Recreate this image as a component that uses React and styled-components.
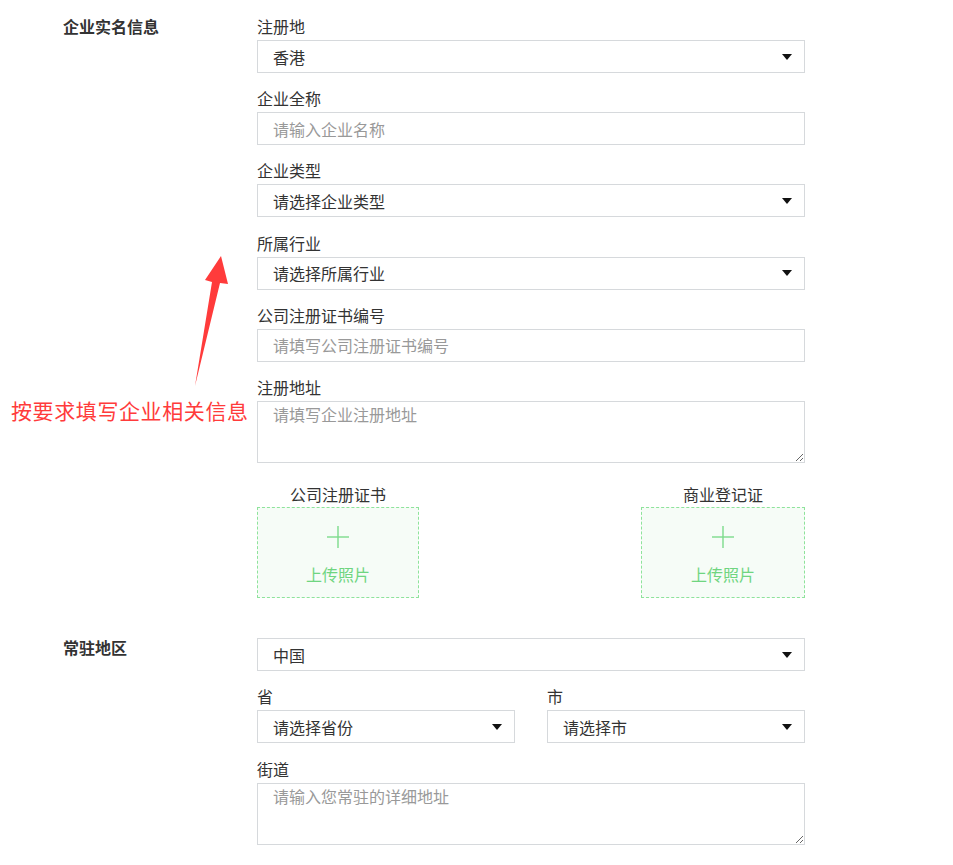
import React from "react"
import styled, { createGlobalStyle } from "styled-components"

const GlobalStyle = createGlobalStyle`
  html, body { margin: 0; padding: 0; background: #fff; }
  body {
    font-family: "Noto Sans CJK SC", "Noto Sans", sans-serif;
    color: #333;
  }
`

const Page = styled.div`
  position: relative;
  width: 953px;
  min-height: 865px;
  padding-top: 16px;
  box-sizing: border-box;
`

const Section = styled.div`
  display: grid;
  grid-template-columns: 194px 548px;
  padding-left: 63px;
  margin-bottom: ${p => p.gap || 0}px;
`

const SectionTitle = styled.div`
  font-size: 16px; font-weight: 700; line-height: 20px;
  color: #333;
  margin-top: ${p => p.shift || 0}px;
`

const Fields = styled.div`
  display: flex; flex-direction: column; gap: 15.2px;
`

const Field = styled.div`
  display: flex; flex-direction: column; gap: 4px;
`

const Label = styled.div`
  font-size: 16px; line-height: 20px; color: #333;
`

const Box = styled.div`
  height: 33px;
  box-sizing: border-box;
  border: 1px solid #d6d9dc;
  display: flex; align-items: center; justify-content: space-between;
  padding: 0 10px 0 15px;
  font-size: 16px;
  color: ${p => (p.placeholder ? "#999" : "#333")};
`

const Caret = styled.span`
  width: 0; height: 0;
  border-left: 5px solid transparent;
  border-right: 5px solid transparent;
  border-top: 6px solid #111;
  margin-right: 2px;
`

const Area = styled.textarea`
  display: block;
  width: 100%;
  height: 62px;
  box-sizing: border-box;
  border: 1px solid #d6d9dc;
  padding: 2px 15px;
  font-family: inherit; font-size: 16px; line-height: 20px;
  resize: vertical; outline: none;
  &::placeholder { color: #999; }
`

const Pair = styled.div`
  display: grid; grid-template-columns: 1fr 1fr; gap: 32px;
`

const UploadRow = styled.div`
  display: flex; justify-content: space-between;
  margin-top: 6px;
`

const Upload = styled.div`
  display: flex; flex-direction: column; align-items: center; gap: 3px;
`

const UploadTitle = styled.div`
  font-size: 16px; line-height: 20px; color: #333;
`

const Drop = styled.div`
  width: ${p => p.w}px; height: 91px;
  box-sizing: border-box;
  border: 1px dashed #8ee39b;
  background: #f6fcf7;
  display: flex; flex-direction: column; align-items: center;
  padding-top: 18px; gap: 16px;
  color: #6fd580; font-size: 16px; line-height: 20px;
`

const Note = styled.div`
  position: absolute;
  left: 11px; top: 396px;
  font-size: 21px; line-height: 28px;
  color: #ff3b3b;
  letter-spacing: 0.6px;
`

const Arrow = styled.svg`
  position: absolute;
  left: 0; top: 0;
`

const Select = ({ value, placeholder }) => (
  <Box placeholder={placeholder ? 1 : 0}>
    <span>{value}</span>
    <Caret />
  </Box>
)

const Input = ({ placeholder }) => (
  <Box placeholder={1}>
    <span>{placeholder}</span>
  </Box>
)

const Plus = () => (
  <svg width="22" height="22" viewBox="0 0 22 22">
    <line x1="11" y1="0" x2="11" y2="22" stroke="#7ddc8b" strokeWidth="1.4" />
    <line x1="0" y1="11" x2="22" y2="11" stroke="#7ddc8b" strokeWidth="1.4" />
  </svg>
)

export default function App() {
  return (
    <Page>
      <GlobalStyle />
      <Section gap={40}>
        <SectionTitle>企业实名信息</SectionTitle>
        <Fields>
          <Field>
            <Label>注册地</Label>
            <Select value="香港" />
          </Field>
          <Field>
            <Label>企业全称</Label>
            <Input placeholder="请输入企业名称" />
          </Field>
          <Field>
            <Label>企业类型</Label>
            <Select value="请选择企业类型" />
          </Field>
          <Field>
            <Label>所属行业</Label>
            <Select value="请选择所属行业" />
          </Field>
          <Field>
            <Label>公司注册证书编号</Label>
            <Input placeholder="请填写公司注册证书编号" />
          </Field>
          <Field>
            <Label>注册地址</Label>
            <Area placeholder="请填写企业注册地址" />
          </Field>
          <UploadRow>
            <Upload>
              <UploadTitle>公司注册证书</UploadTitle>
              <Drop w={162}>
                <Plus />
                <span>上传照片</span>
              </Drop>
            </Upload>
            <Upload>
              <UploadTitle>商业登记证</UploadTitle>
              <Drop w={164}>
                <Plus />
                <span>上传照片</span>
              </Drop>
            </Upload>
          </UploadRow>
        </Fields>
      </Section>

      <Section>
        <SectionTitle shift={-1}>常驻地区</SectionTitle>
        <Fields>
          <Select value="中国" />
          <Pair>
            <Field>
              <Label>省</Label>
              <Select value="请选择省份" />
            </Field>
            <Field>
              <Label>市</Label>
              <Select value="请选择市" />
            </Field>
          </Pair>
          <Field>
            <Label>街道</Label>
            <Area placeholder="请输入您常驻的详细地址" />
          </Field>
        </Fields>
      </Section>

      <Arrow width="953" height="865" viewBox="0 0 953 865">
        <polygon
          points="195,386 212,282 205,280 221,256 228,284 220,283"
          fill="#ff3b3b"
        />
      </Arrow>
      <Note>按要求填写企业相关信息</Note>
    </Page>
  )
}
